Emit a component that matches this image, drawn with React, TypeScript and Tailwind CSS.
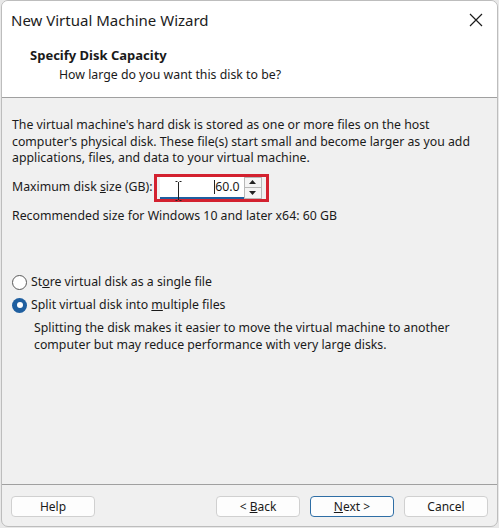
import React from "react";

const WinButton: React.FC<{ children: React.ReactNode; primary?: boolean }> = ({ children, primary }) => (
  <button
    className={
      primary
        ? "w-[84px] h-[21px] rounded-[4px] border border-[#2f6ea5] bg-[#fdfdfd] text-[12px] text-[#1a1a1a] leading-none"
        : "w-[84px] h-[21px] rounded-[4px] border border-[#d0d0d0] bg-[#fdfdfd] text-[12px] text-[#1a1a1a] leading-none"
    }
  >
    {children}
  </button>
);

const App: React.FC = () => {
  return (
    <div
      className="w-[499px] h-[528px] bg-[#e8e8e8] overflow-hidden"
      style={{ fontFamily: '"Noto Sans", "Open Sans", sans-serif' }}
    >
      <div className="flex flex-col w-[497px] h-[527px] ml-px rounded-t-[7px] rounded-b-[7px] border border-[#bdbdbd] bg-[#f0f0f0] overflow-hidden text-[#1a1a1a]">
        {/* title + header */}
        <div className="bg-white h-[97px] border-b border-[#a0a0a0] flex flex-col">
          <div className="flex items-center justify-between h-[38px] pl-[9px] pr-[10px]">
            <span className="text-[15px] text-[#1c1c1c]">New Virtual Machine Wizard</span>
            <svg width="16" height="16" viewBox="0 0 16 16" className="mr-[3px]">
              <path d="M2 2 L14 14 M14 2 L2 14" stroke="#1c1c1c" strokeWidth="1.2" />
            </svg>
          </div>
          <div className="pl-[28px] text-[13px] font-bold leading-[18px] mt-[7px]">Specify Disk Capacity</div>
          <div className="pl-[57px] text-[12.3px] leading-[18px] mt-[2px]">How large do you want this disk to be?</div>
        </div>

        {/* body */}
        <div className="flex-1 flex flex-col px-[10px] pt-[19px] text-[12.3px] leading-[16.5px]">
          <p>
            The virtual machine's hard disk is stored as one or more files on the host
            <br />
            computer's physical disk. These file(s) start small and become larger as you add
            <br />
            applications, files, and data to your virtual machine.
          </p>

          <div className="flex items-center mt-[7px] h-[28px]">
            <span>
              Maximum disk <span className="underline">s</span>ize (GB):
            </span>
            <div className="ml-px flex items-center h-[28px] w-[115px] border-[3px] border-[#d3212f] pl-[3px] pr-[4px]">
              <div className="relative flex-1 h-[22px] bg-white border-b-2 border-[#1f5fa0] flex items-center justify-end pr-[4px]">
                <svg width="7" height="20" viewBox="0 0 7 20" className="absolute left-[15px] top-[4px]">
                  <path d="M0.5 0.5 H2.5 M4.5 0.5 H6.5 M3.5 1 V19 M0.5 19.5 H2.5 M4.5 19.5 H6.5" stroke="#222" strokeWidth="1" />
                </svg>
                <span className="border-l border-[#222] leading-[14px]">60.0</span>
              </div>
              <div className="flex flex-col w-[18px] h-[22px] border border-[#b8b8b8] bg-[#f4f4f4]">
                <div className="flex-1 flex items-center justify-center border-b border-[#b8b8b8]">
                  <svg width="7" height="4" viewBox="0 0 7 4">
                    <path d="M0 4 L3.5 0 L7 4 Z" fill="#222" />
                  </svg>
                </div>
                <div className="flex-1 flex items-center justify-center">
                  <svg width="7" height="4" viewBox="0 0 7 4">
                    <path d="M0 0 L3.5 4 L7 0 Z" fill="#222" />
                  </svg>
                </div>
              </div>
            </div>
          </div>

          <p className="mt-[6px]">Recommended size for Windows 10 and later x64: 60 GB</p>

          <div className="flex items-center mt-[50px] h-[16px]">
            <span className="w-[15px] h-[15px] rounded-full border border-[#5a5a5a] bg-white" />
            <span className="ml-[4px]">
              St<span className="underline">o</span>re virtual disk as a single file
            </span>
          </div>
          <div className="flex items-center mt-[7px] h-[16px]">
            <span className="w-[15px] h-[15px] rounded-full bg-[#1f5fa0] flex items-center justify-center">
              <span className="w-[6px] h-[6px] rounded-full bg-white" />
            </span>
            <span className="ml-[4px]">
              Split virtual disk into <span className="underline">m</span>ultiple files
            </span>
          </div>
          <p className="pl-[22px] mt-[7px]">
            Splitting the disk makes it easier to move the virtual machine to another
            <br />
            computer but may reduce performance with very large disks.
          </p>
        </div>

        {/* footer */}
        <div className="h-[42px] border-t border-[#a0a0a0] flex items-start pt-[11px] pl-[9px] pr-[9px]">
          <WinButton>Help</WinButton>
          <div className="flex-1" />
          <div className="flex gap-[10px]">
            <WinButton>
              &lt; <span className="underline">B</span>ack
            </WinButton>
            <WinButton primary>
              <span className="underline">N</span>ext &gt;
            </WinButton>
            <WinButton>Cancel</WinButton>
          </div>
        </div>
      </div>
    </div>
  );
};

export default App;
